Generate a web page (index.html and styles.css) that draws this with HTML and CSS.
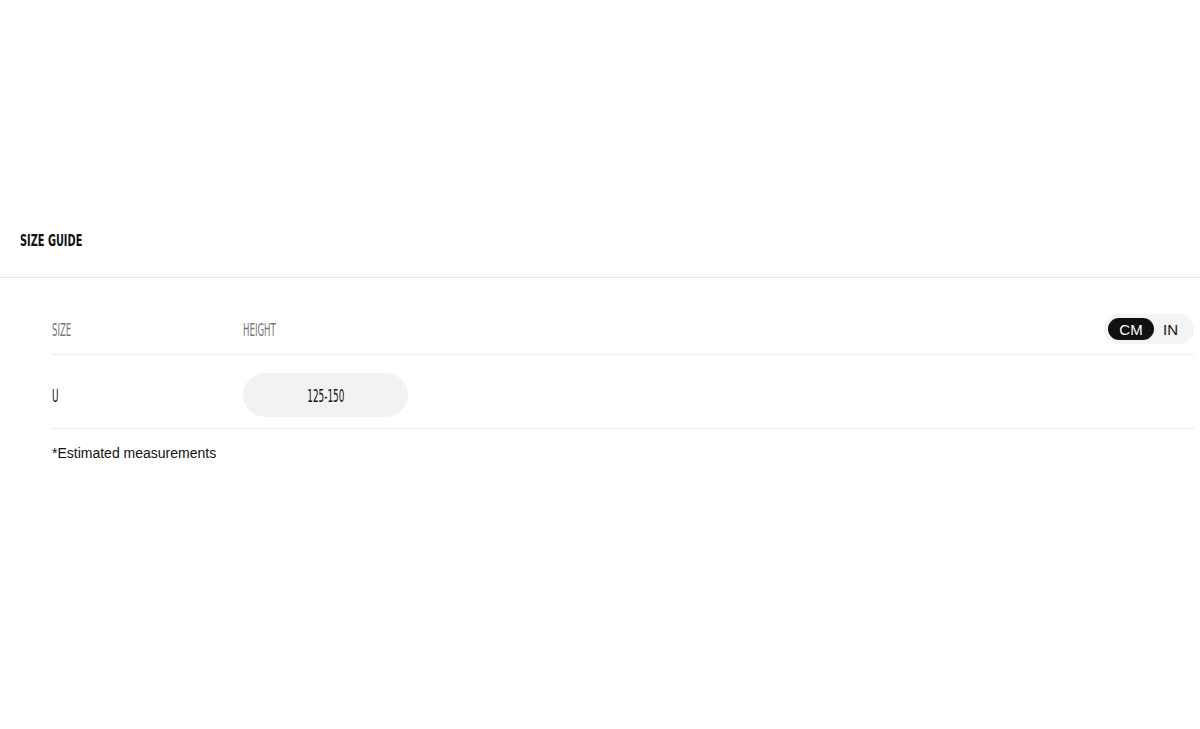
FILE: index.html
```html
<!doctype html>
<html>
<head>
<meta charset=utf-8>
<title>Size guide</title>
<link rel="stylesheet" href="styles.css">
</head>
<body>

<header class=guide-head>
  <h1 class=guide-title><span class=squeeze>SIZE GUIDE</span></h1>
</header>

<section class=guide-body>
  <div class="size-row head-row">
    <div class=col-size><span class="squeeze thin">SIZE</span></div>
    <div class=col-height><span class="squeeze thin">HEIGHT</span></div>
    <div class=unit-toggle>
      <button class="unit on">CM</button>
      <button class=unit>IN</button>
    </div>
  </div>
  <div class=size-row>
    <div class=col-size><span class="squeeze val">U</span></div>
    <div class=col-height><span class=pill><span class="squeeze val">125-150</span></span></div>
  </div>
  <p class=note>*Estimated measurements</p>
</section>

</body>
</html>
```

FILE: styles.css
```css
body {
  margin: 0;
  background: #fff;
  color: #111;
  font-family: "Liberation Sans", Arial, sans-serif;
}

/* condensed display face stand-in */
.squeeze {
  display: inline-block;
  font-family: "Liberation Sans Narrow", "DejaVu Sans Condensed", sans-serif;
  transform: scaleX(0.68);
  transform-origin: left center;
  white-space: nowrap;
}

.guide-head {
  padding: 231px 20px 26px;
  border-bottom: 1px solid #e5e5e5;
}
.guide-title {
  margin: 0;
  font-size: 16px;
  line-height: 20px;
  font-weight: bold;
  color: #111;
}

.guide-body {
  padding: 0 6px 0 52px;
}

.size-row {
  display: flex;
  align-items: center;
  border-bottom: 1px solid #ececec;
  padding: 18px 0 11px;
}
.head-row {
  padding: 36px 0 10px;
}

.col-size {
  width: 191px;
}
.col-height {
  flex: 1;
}

.thin {
  font-size: 18px;
  color: #757575;
  font-weight: normal;
  transform: scaleX(0.53);
}
.val {
  font-size: 18px;
  color: #111;
  transform: scaleX(0.55);
}

.pill {
  display: flex;
  justify-content: center;
  align-items: center;
  width: 165px;
  height: 44px;
  border-radius: 22px;
  background: #f2f2f2;
}
.pill .squeeze {
  transform-origin: center;
}

.unit-toggle {
  display: flex;
  align-items: center;
  padding: 4px;
  border-radius: 15px;
  background: #f4f4f4;
}
.unit {
  border: 0;
  background: none;
  font-family: "Liberation Sans", Arial, sans-serif;
  font-size: 15px;
  color: #111;
  height: 22px;
  padding: 0 12px 0 9px;
  border-radius: 11px;
  cursor: pointer;
}
.unit.on {
  background: #111;
  color: #fff;
  width: 46px;
  padding: 0;
}

.note {
  margin: 16px 0 0;
  font-size: 14px;
  line-height: 16px;
  color: #111;
}
```
